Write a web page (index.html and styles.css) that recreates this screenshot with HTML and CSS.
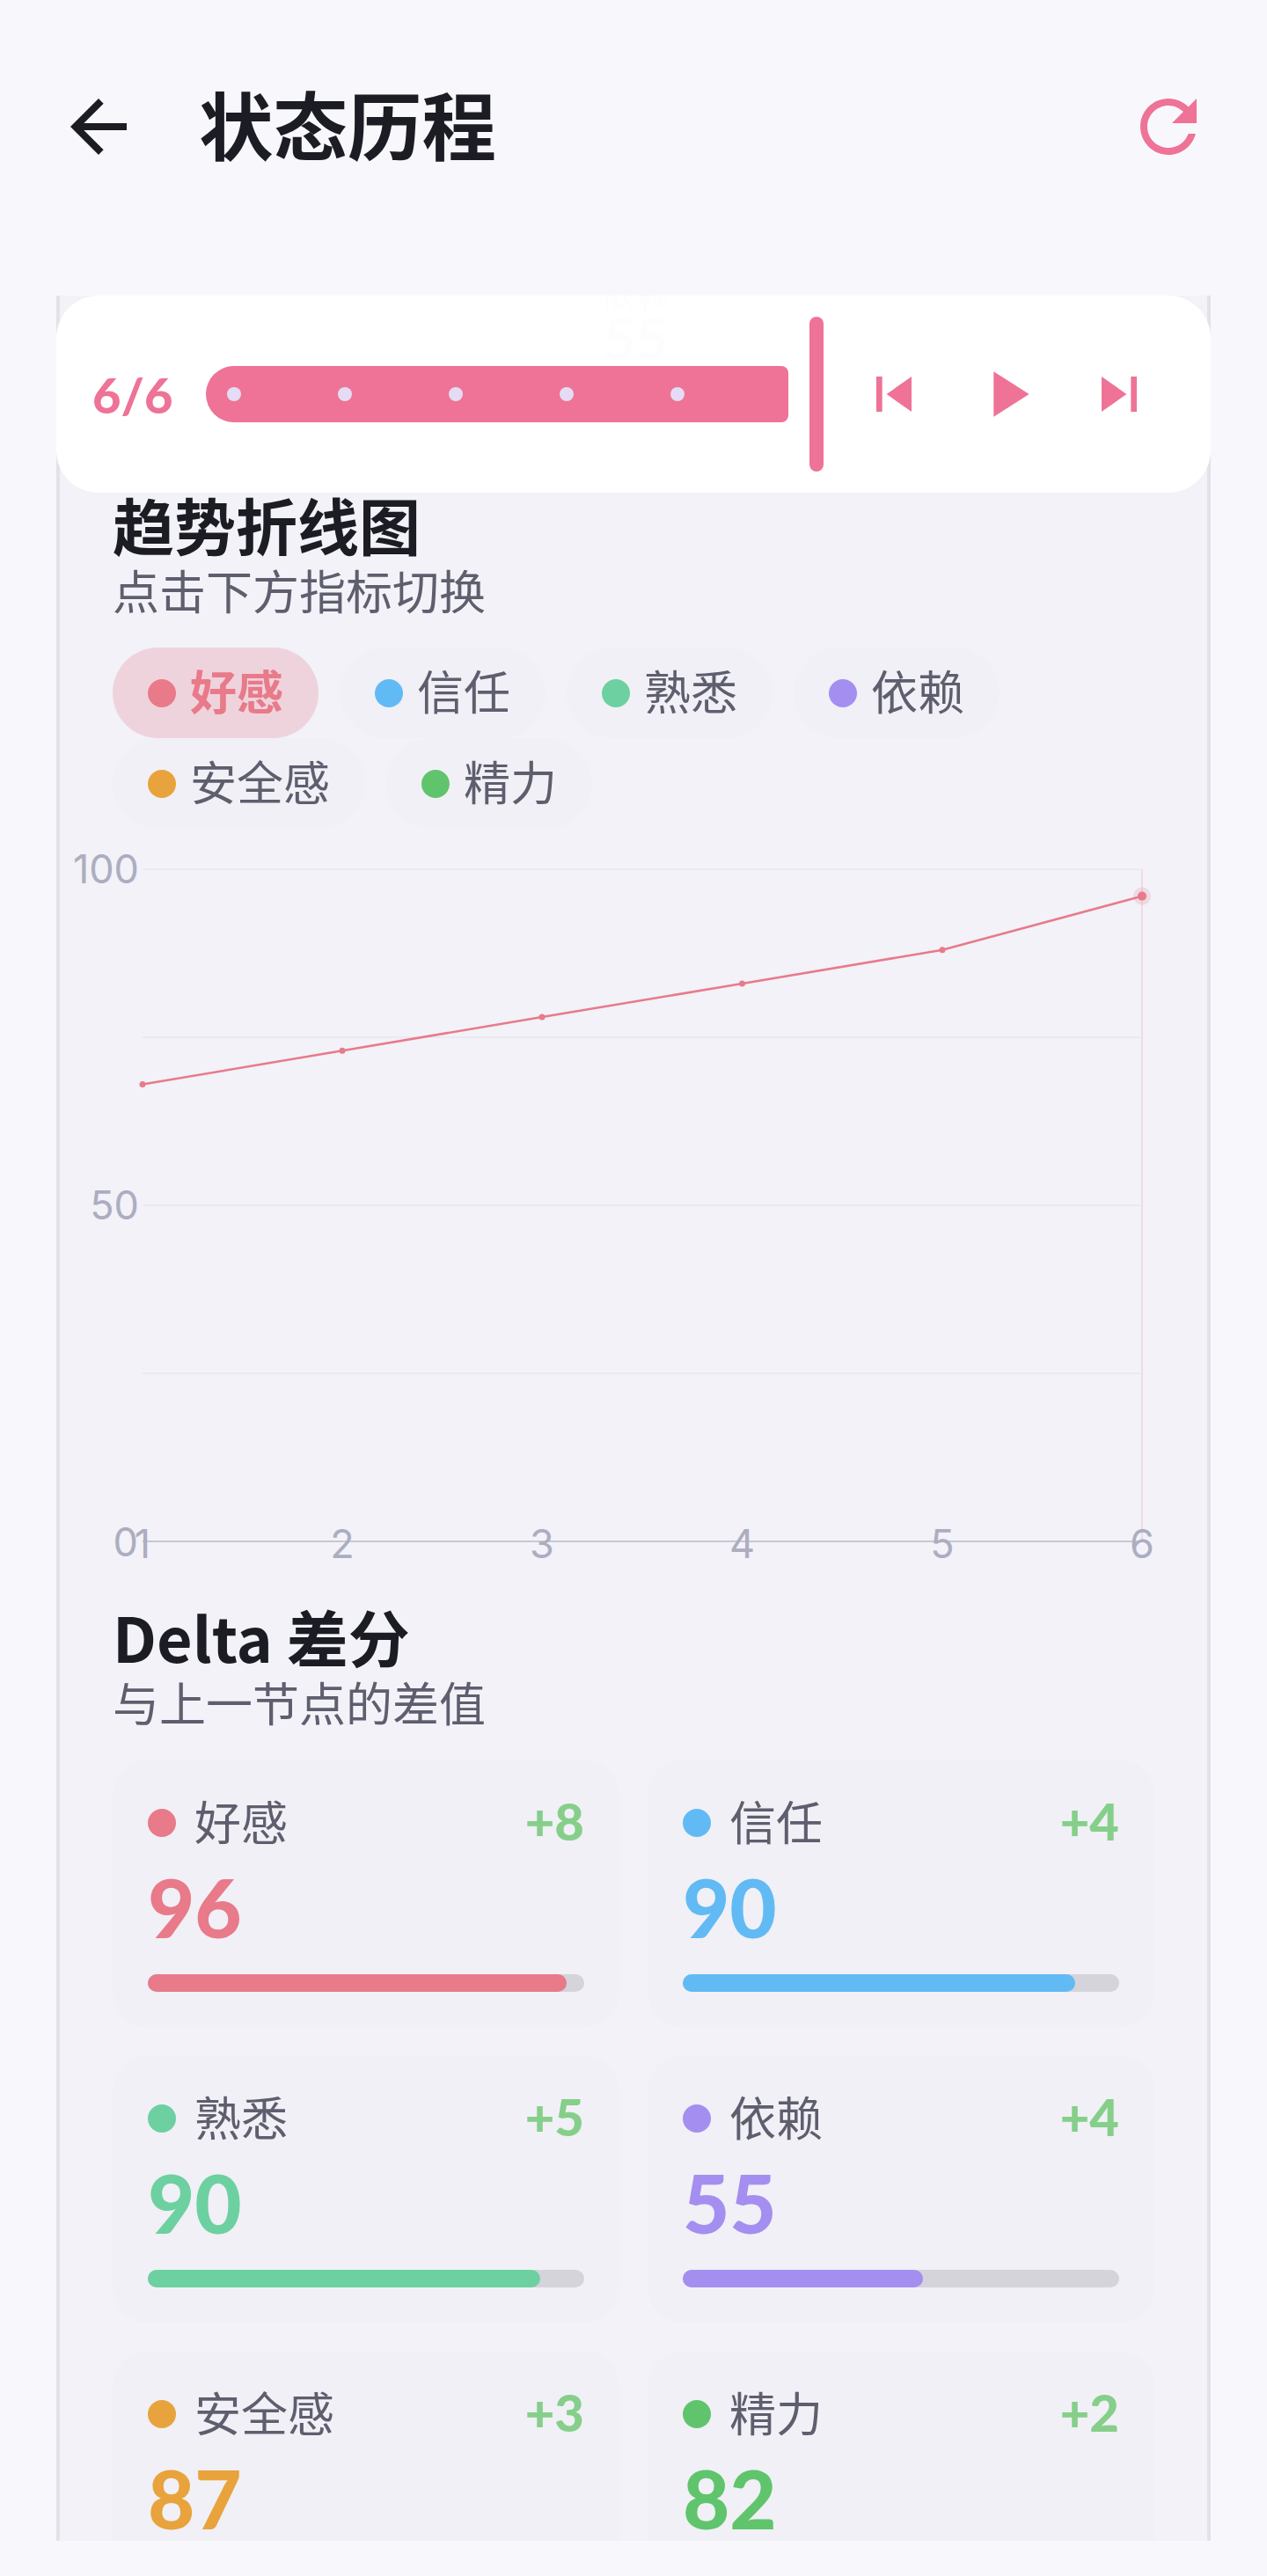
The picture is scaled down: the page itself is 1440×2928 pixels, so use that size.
FILE: index.html
```html
<!DOCTYPE html>
<html lang="zh-CN">
<head>
<meta charset="utf-8">
<title>状态历程</title>
<link rel="stylesheet" href="styles.css">
</head>
<body>
<header class="topbar">
  <svg class="icon-96 ink" viewBox="0 0 24 24"><path d="M20 11H7.83l5.59-5.59L12 4l-8 8 8 8 1.41-1.41L7.83 13H20v-2z"/></svg>
  <h1 class="page-title">状态历程</h1>
  <svg class="icon-96 pink push-right" viewBox="0 0 24 24"><path d="M17.65 6.35C16.2 4.9 14.21 4 12 4c-4.42 0-7.99 3.58-7.99 8s3.57 8 7.99 8c3.73 0 6.84-2.55 7.73-6h-2.08c-.82 2.33-3.04 4-5.65 4-3.31 0-6-2.69-6-6s2.69-6 6-6c1.66 0 3.14.69 4.22 1.78L13 11h7V4l-2.35 2.35z"/></svg>
</header>

<main class="panel">
  <div class="scroller">
    <div class="ghost">
      <div class="ghost-label">依赖</div>
      <div class="ghost-value">55</div>
    </div>
    <section class="content">
      <h2 class="sec-title">趋势折线图</h2>
      <p class="sec-sub">点击下方指标切换</p>
      <div class="chips">
        <div class="chip active"><i class="dot c1"></i><span class="chip-name">好感</span></div>
        <div class="chip"><i class="dot c2"></i><span class="chip-name">信任</span></div>
        <div class="chip"><i class="dot c3"></i><span class="chip-name">熟悉</span></div>
        <div class="chip"><i class="dot c4"></i><span class="chip-name">依赖</span></div>
        <div class="chip"><i class="dot c5"></i><span class="chip-name">安全感</span></div>
        <div class="chip"><i class="dot c6"></i><span class="chip-name">精力</span></div>
      </div>

      <svg class="chart" viewBox="68 940 1304 850">
        <g class="grid">
          <line x1="162" x2="1298" y1="988" y2="988"/>
          <line x1="162" x2="1298" y1="1179" y2="1179"/>
          <line x1="162" x2="1298" y1="1370" y2="1370"/>
          <line x1="162" x2="1298" y1="1561" y2="1561"/>
        </g>
        <line class="cursor" x1="1298" x2="1298" y1="988" y2="1752"/>
        <line class="axis" x1="162" x2="1298" y1="1752" y2="1752"/>
        <g class="labels">
          <text class="end" x="158" y="1004">100</text>
          <text class="end" x="158" y="1386">50</text>
          <text class="end" x="157" y="1769">0</text>
          <text class="mid" x="162" y="1771">1</text>
          <text class="mid" x="389" y="1771">2</text>
          <text class="mid" x="616" y="1771">3</text>
          <text class="mid" x="843.5" y="1771">4</text>
          <text class="mid" x="1071" y="1771">5</text>
          <text class="mid" x="1298" y="1771">6</text>
        </g>
        <polyline class="series" points="162,1232.5 389,1194.3 616,1156 843.5,1118 1071,1079.7 1298,1018.6"/>
        <g class="pts">
          <circle cx="162" cy="1232.5" r="3.5"/>
          <circle cx="389" cy="1194.3" r="3.5"/>
          <circle cx="616" cy="1156" r="3.5"/>
          <circle cx="843.5" cy="1118" r="3.5"/>
          <circle cx="1071" cy="1079.7" r="3.5"/>
          <circle class="halo" cx="1298" cy="1018.6" r="10"/>
          <circle cx="1298" cy="1018.6" r="5"/>
        </g>
      </svg>

      <h2 class="sec-title delta-title">Delta 差分</h2>
      <p class="sec-sub">与上一节点的差值</p>

      <div class="cards">
        <article class="card">
          <div class="card-head"><i class="dot c1"></i><span class="card-name">好感</span><span class="card-delta">+8</span></div>
          <div class="card-value t1">96</div>
          <div class="bar"><div class="fill c1" style="width:96%"></div></div>
        </article>
        <article class="card">
          <div class="card-head"><i class="dot c2"></i><span class="card-name">信任</span><span class="card-delta">+4</span></div>
          <div class="card-value t2">90</div>
          <div class="bar"><div class="fill c2" style="width:90%"></div></div>
        </article>
        <article class="card">
          <div class="card-head"><i class="dot c3"></i><span class="card-name">熟悉</span><span class="card-delta">+5</span></div>
          <div class="card-value t3">90</div>
          <div class="bar"><div class="fill c3" style="width:90%"></div></div>
        </article>
        <article class="card">
          <div class="card-head"><i class="dot c4"></i><span class="card-name">依赖</span><span class="card-delta">+4</span></div>
          <div class="card-value t4">55</div>
          <div class="bar"><div class="fill c4" style="width:55%"></div></div>
        </article>
        <article class="card">
          <div class="card-head"><i class="dot c5"></i><span class="card-name">安全感</span><span class="card-delta">+3</span></div>
          <div class="card-value t5">87</div>
          <div class="bar"><div class="fill c5" style="width:87%"></div></div>
        </article>
        <article class="card">
          <div class="card-head"><i class="dot c6"></i><span class="card-name">精力</span><span class="card-delta">+2</span></div>
          <div class="card-value t6">82</div>
          <div class="bar"><div class="fill c6" style="width:82%"></div></div>
        </article>
      </div>
    </section>
  </div>

  <div class="player">
    <span class="counter">6/6</span>
    <div class="track">
      <i class="tick"></i><i class="tick"></i><i class="tick"></i><i class="tick"></i><i class="tick"></i>
    </div>
    <div class="thumb"></div>
    <div class="controls">
      <svg class="icon-80 pink" viewBox="0 0 24 24"><path d="M6 6h2v12H6zm3.5 6l8.5 6V6z"/></svg>
      <svg class="icon-88 pink" viewBox="0 0 24 24"><path d="M8 5v14l11-7z"/></svg>
      <svg class="icon-80 pink" viewBox="0 0 24 24"><path d="M6 18l8.5-6L6 6v12zM16 6v12h2V6h-2z"/></svg>
    </div>
  </div>
</main>
</body>
</html>
```
FILE: styles.css
```css
* { box-sizing: border-box; }
html, body { margin: 0; padding: 0; }
body {
  width: 1440px;
  height: 2928px;
  overflow: hidden;
  background: #f8f8fc;
  color: #1c1c24;
  font-family: "Noto Sans CJK SC", sans-serif;
}
svg { display: block; flex: none; }
.ink { fill: #1c1c24; }
.pink { fill: #ee7396; }
.icon-96 { width: 96px; height: 96px; }
.icon-88 { width: 88px; height: 88px; }
.icon-80 { width: 80px; height: 80px; }
.push-right { margin-left: auto; }

.topbar {
  display: flex;
  align-items: flex-start;
  height: 336px;
  padding: 96px 64px 0;
}
.page-title {
  margin: -5px 0 0 66px;
  font-size: 84.5px;
  line-height: 96px;
  font-weight: 700;
}

.panel {
  position: relative;
  height: 2552px;
  margin: 0 64px;
}
.scroller {
  height: 100%;
  overflow: hidden;
  background: #f2f2f8;
  border-left: 4px solid #e2e2e8;
  border-right: 4px solid #e2e2e8;
}
.ghost {
  height: 224px;
  overflow: hidden;
  display: flex;
  flex-direction: column;
  align-items: center;
  padding-left: 4px;
  color: #9a9aac;
}
.ghost-label { margin-top: -26px; font-size: 40px; line-height: 44px; }
.ghost-value {
  font-family: "Lato", sans-serif;
  font-size: 64px;
  line-height: 60px;
  font-weight: 700;
}

.content { padding: 0 60px; }
.sec-title {
  margin: -2px 0 0;
  font-size: 70px;
  line-height: 76px;
  font-weight: 700;
}
.sec-sub {
  margin: 10px 0 0;
  font-size: 53px;
  line-height: 52px;
  color: #5e5e6e;
}
.chips {
  display: flex;
  flex-wrap: wrap;
  gap: 0 24px;
  margin-top: 40px;
}
.chip {
  display: flex;
  align-items: center;
  gap: 16px;
  height: 103px;
  padding: 0 40px;
  border-radius: 52px;
  background: #f0f0f6;
  font-size: 53px;
  color: #5e5e6e;
}
.chip-name { margin-bottom: 7px; }
.chip.active {
  background: #efd3dc;
  color: #e87a8a;
  font-weight: 700;
}
.dot {
  display: block;
  flex: none;
  width: 32px;
  height: 32px;
  border-radius: 50%;
}
.c1 { background: #e87a8a; }
.c2 { background: #62baf4; }
.c3 { background: #6dd0a0; }
.c4 { background: #a48ef0; }
.c5 { background: #e8a33c; }
.c6 { background: #60c46c; }
.t1 { color: #e87a8a; }
.t2 { color: #62baf4; }
.t3 { color: #6dd0a0; }
.t4 { color: #a48ef0; }
.t5 { color: #e8a33c; }
.t6 { color: #60c46c; }

.chart {
  width: 1304px;
  height: 850px;
  margin: -2px -60px 0;
}
.grid line { stroke: #eaeaf0; stroke-width: 2; }
.cursor { stroke: #f0dbe3; stroke-width: 2; }
.axis { stroke: #c8c8d4; stroke-width: 2; }
.labels text { fill: #adadc0; font-size: 45px; font-family: "Inter", sans-serif; }
.labels .end { text-anchor: end; }
.labels .mid { text-anchor: middle; }
.series { fill: none; stroke: #e87a8a; stroke-width: 2.5; }
.pts circle { fill: #e87a8a; }
.pts .halo { fill: #e87a8a; fill-opacity: .2; }

.sec-title.delta-title { margin-top: 32px; }
.cards {
  display: grid;
  grid-template-columns: 576px 576px;
  gap: 32px;
  margin-top: 40px;
}
.card {
  height: 304px;
  padding: 40px;
  border-radius: 40px;
  background: #f0f0f6;
}
.card-head {
  display: flex;
  align-items: center;
  gap: 21px;
  height: 64px;
  font-size: 53px;
  color: #5e5e6e;
}
.card-name { margin-bottom: 6px; }
.card-delta {
  margin: 0 0 6px auto;
  font-family: "Lato", sans-serif;
  font-size: 58px;
  font-weight: 900;
  color: #86cf8a;
}
.card-value {
  margin-top: 14px;
  font-family: "Lato", sans-serif;
  font-size: 92px;
  line-height: 100px;
  font-weight: 900;
}
.bar {
  height: 20px;
  margin-top: 26px;
  border-radius: 10px;
  background: #d4d4da;
}
.fill { height: 100%; border-radius: 10px; }

.player {
  position: absolute;
  top: 0;
  left: 0;
  right: 0;
  height: 224px;
  display: flex;
  align-items: center;
  padding: 0 64px 0 41px;
  border-radius: 48px;
  background: rgba(255, 255, 255, .98);
}
.counter {
  width: 129px;
  font-family: "Lato", sans-serif;
  font-size: 56px;
  font-weight: 900;
  color: #ee7396;
}
.track {
  display: flex;
  align-items: center;
  gap: 110px;
  width: 662px;
  height: 64px;
  padding-left: 24px;
  border-radius: 32px 8px 8px 32px;
  background: #ee7396;
}
.tick {
  display: block;
  flex: none;
  width: 16px;
  height: 16px;
  border-radius: 50%;
  background: #e4dcf4;
}
.thumb {
  width: 16px;
  height: 176px;
  margin-left: 24px;
  border-radius: 8px;
  background: #ee7396;
}
.controls {
  display: flex;
  align-items: center;
  gap: 44px;
  margin-left: auto;
}
```
